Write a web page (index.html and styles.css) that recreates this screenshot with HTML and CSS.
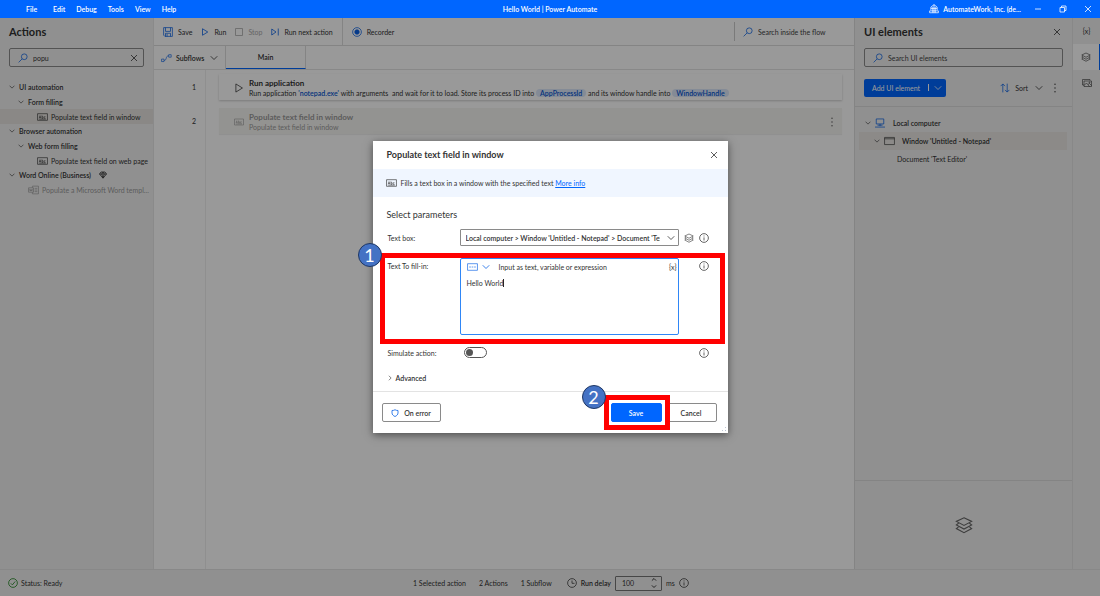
FILE: index.html
```html
<!DOCTYPE html>
<html lang="en">
<head>
    <meta charset="UTF-8">
    <meta name="viewport" content="width=device-width, initial-scale=1.0">
    <title>Hello World | Power Automate</title>
    <link rel="stylesheet" href="styles.css">
</head>
<body>

    <!-- shared icons -->
    <svg class="sprite" aria-hidden="true">
        <symbol id="i-search" viewBox="0 0 16 16"><circle cx="10" cy="6" r="4.6"/><path d="M6.6 9.4 1 15"/></symbol>
        <symbol id="i-close" viewBox="0 0 16 16"><path d="M2 2l12 12M14 2 2 14"/></symbol>
        <symbol id="i-down" viewBox="0 0 16 16"><path d="M1.5 4.5 8 11l6.5-6.5"/></symbol>
        <symbol id="i-right" viewBox="0 0 16 16"><path d="M5 2l6 6-6 6"/></symbol>
        <symbol id="i-play" viewBox="0 0 16 16"><path d="M3 1.5v13L13.5 8z"/></symbol>
        <symbol id="i-next" viewBox="0 0 16 16"><path d="M1.5 2v12L10 8zM14.5 1v14"/></symbol>
        <symbol id="i-save" viewBox="0 0 16 16"><path d="M1 1h14v14H3l-2-2zM4 1v6h8V1M4 15v-5h8v5M6.5 11v4"/></symbol>
        <symbol id="i-stop" viewBox="0 0 16 16"><path d="M1 1h14v14H1z"/></symbol>
        <symbol id="i-record" viewBox="0 0 16 16"><circle cx="8" cy="8" r="7"/><circle cx="8" cy="8" r="3.6" fill="currentColor"/></symbol>
        <symbol id="i-flow" viewBox="0 0 20 16"><path d="M1 10h4.500v4.500H1zM14 2h4.500v4.500H14zM5.500 12.500c6 0 2-8.500 8.500-8.500"/></symbol>
        <symbol id="i-field" viewBox="0 0 20 16"><path d="M1 2h18v12H1z"/><path stroke-width="1" d="M4 10.500l1.500-5 1.500 5M4.500 9h2M9 5v5.500h2V7.500H9M15.500 7.500H13v3h2.500M4 12h12"/></symbol>
        <symbol id="i-word" viewBox="0 0 20 16"><path d="M8 4V1h11v14H8v-3M1 4h9v8H1zM3 6l1 4 1.500-3L7 10l1-4M12 5h5M12 8h5M12 11h5"/></symbol>
        <symbol id="i-gem" viewBox="0 0 16 16"><path d="M4 2h8l3 4-7 8.500L1 6zM1 6h14M5.500 6 8 14l2.500-8L8 2 5.500 6"/></symbol>
        <symbol id="i-layers" viewBox="0 0 20 20"><path d="M10 2l8.500 4L10 10.500 1.500 6zM4 8l-2.500 2L10 14.500l8.500-4.500L16 8M4 12l-2.500 2L10 18.500l8.500-4.500L16 12"/></symbol>
        <symbol id="i-image" viewBox="0 0 20 16"><path d="M4 12H1V1h15v2M4 4h15v11H4zM4 13l5-5 6 7M12 11l3-2 4 4"/><circle cx="15" cy="7" r="1"/></symbol>
        <symbol id="i-info" viewBox="0 0 16 16"><circle cx="8" cy="8" r="7"/><path d="M8 7v5M8 4v1.500"/></symbol>
        <symbol id="i-clock" viewBox="0 0 16 16"><circle cx="8" cy="8" r="7"/><path d="M8 4v4.500h4"/></symbol>
        <symbol id="i-check" viewBox="0 0 16 16"><circle cx="8" cy="8" r="7"/><path d="M4.500 8.500 7 11l4.500-5.500"/></symbol>
        <symbol id="i-sort" viewBox="0 0 16 16"><path d="M4.500 15V1.500M1 5l3.500-3.500L8 5M11.500 1v13.500M8 11l3.500 3.500L15 11"/></symbol>
        <symbol id="i-more" viewBox="0 0 16 16"><g fill="currentColor" stroke="none"><circle cx="8" cy="2" r="1.100"/><circle cx="8" cy="8" r="1.100"/><circle cx="8" cy="14" r="1.100"/></g></symbol>
        <symbol id="i-pc" viewBox="0 0 16 16"><path d="M2 1.500h12v8H2zM8 9.500V13M4 11.500h8M0 14.500h16"/></symbol>
        <symbol id="i-window" viewBox="0 0 20 16"><path d="M1 1.500h18v13H1zM1 4h18"/></symbol>
        <symbol id="i-shield" viewBox="0 0 16 16"><path d="M8 1.500c2 1.300 4 1.500 6 1.500v5c0 3-2.500 5.500-6 7-3.500-1.500-6-4-6-7V3c2 0 4-.2 6-1.500z"/></symbol>
        <symbol id="i-org" viewBox="0 0 16 16"><path d="M3 10V5l5-4 5 4v5M1 14h14v-3H1zM6 14V5M10 14V5M3 7h10M8 1v13"/></symbol>
        <symbol id="i-min" viewBox="0 0 16 16"><path d="M2 8h12"/></symbol>
        <symbol id="i-restore" viewBox="0 0 16 16"><path d="M2 5h9v9H2zM5 5V2h9v9h-3"/></symbol>
        <symbol id="i-text" viewBox="0 0 20 16"><path d="M1 2h18v12H1zM4 8h3M8.500 8h3M13 8h3"/></symbol>
        <symbol id="i-spin" viewBox="0 0 10 20"><path d="M1.500 6 5 2.500 8.500 6M1.500 14 5 17.500 8.500 14"/></symbol>
    </svg>

    <header class="titlebar">
        <nav class="menu">
            <button>File</button>
            <button>Edit</button>
            <button>Debug</button>
            <button>Tools</button>
            <button>View</button>
            <button>Help</button>
        </nav>
        <div class="window-title">Hello World | Power Automate</div>
        <div class="window-controls">
            <button class="account"><svg class="icon"><use href="#i-org"/></svg>AutomateWork, Inc. (de...</button>
            <button class="win-btn" aria-label="Minimize"><svg class="icon small"><use href="#i-min"/></svg></button>
            <button class="win-btn" aria-label="Restore"><svg class="icon small"><use href="#i-restore"/></svg></button>
            <button class="win-btn" aria-label="Close"><svg class="icon small"><use href="#i-close"/></svg></button>
        </div>
    </header>

    <div class="app">
        <div class="workspace">
            <aside class="actions">
                <h2>Actions</h2>
                <div class="search">
                    <svg class="icon blue"><use href="#i-search"/></svg>
                    <input type="text" value="popu" aria-label="Search actions">
                    <button aria-label="Clear"><svg class="icon small"><use href="#i-close"/></svg></button>
                </div>
                <ul class="tree">
                    <li class="group"><svg class="icon tiny"><use href="#i-down"/></svg>UI automation</li>
                    <li class="subgroup"><svg class="icon tiny"><use href="#i-down"/></svg>Form filling</li>
                    <li class="leaf selected"><svg class="icon wide"><use href="#i-field"/></svg>Populate text field in window</li>
                    <li class="group"><svg class="icon tiny"><use href="#i-down"/></svg>Browser automation</li>
                    <li class="subgroup"><svg class="icon tiny"><use href="#i-down"/></svg>Web form filling</li>
                    <li class="leaf"><svg class="icon wide"><use href="#i-field"/></svg>Populate text field on web page</li>
                    <li class="group"><svg class="icon tiny"><use href="#i-down"/></svg>Word Online (Business)<svg class="icon small gem"><use href="#i-gem"/></svg></li>
                    <li class="leaf word"><svg class="icon wide"><use href="#i-word"/></svg>Populate a Microsoft Word templ...</li>
                </ul>
            </aside>

            <main class="designer">
                <div class="toolbar">
                    <button><svg class="icon blue"><use href="#i-save"/></svg>Save</button>
                    <button><svg class="icon small blue"><use href="#i-play"/></svg>Run</button>
                    <button disabled><svg class="icon small"><use href="#i-stop"/></svg>Stop</button>
                    <button><svg class="icon small blue"><use href="#i-next"/></svg>Run next action</button>
                    <button class="recorder"><svg class="icon blue"><use href="#i-record"/></svg>Recorder</button>
                    <div class="flow-search">
                        <svg class="icon blue"><use href="#i-search"/></svg>
                        <input type="text" placeholder="Search inside the flow" aria-label="Search inside the flow">
                    </div>
                </div>
                <div class="tabs">
                    <button class="subflows"><svg class="icon wide blue"><use href="#i-flow"/></svg>Subflows<svg class="icon small"><use href="#i-down"/></svg></button>
                    <button class="tab">Main</button>
                </div>
                <div class="flow">
                    <div class="line-numbers"><span>1</span><span>2</span></div>
                    <div class="steps">
                        <div class="step">
                            <svg class="icon"><use href="#i-play"/></svg>
                            <div>
                                <h3>Run application</h3>
                                <p>Run application <b>'notepad.exe'</b> with arguments &nbsp;and wait for it to load. Store its process ID into <b class="var">AppProcessId</b> and its window handle into <b class="var">WindowHandle</b></p>
                            </div>
                        </div>
                        <div class="step pending">
                            <svg class="icon wide"><use href="#i-field"/></svg>
                            <div>
                                <h3>Populate text field in window</h3>
                                <p>Populate text field in window</p>
                            </div>
                            <button aria-label="More actions"><svg class="icon"><use href="#i-more"/></svg></button>
                        </div>
                    </div>
                </div>
            </main>

            <aside class="elements">
                <div class="panel-head">
                    <h2>UI elements</h2>
                    <button aria-label="Close pane"><svg class="icon small"><use href="#i-close"/></svg></button>
                </div>
                <div class="search">
                    <svg class="icon blue"><use href="#i-search"/></svg>
                    <input type="text" placeholder="Search UI elements" aria-label="Search UI elements">
                </div>
                <div class="element-actions">
                    <button class="add-btn">Add UI element<span></span><svg class="icon small"><use href="#i-down"/></svg></button>
                    <button class="sort-btn"><svg class="icon blue"><use href="#i-sort"/></svg>Sort<svg class="icon small"><use href="#i-down"/></svg></button>
                    <button aria-label="More"><svg class="icon"><use href="#i-more"/></svg></button>
                </div>
                <ul class="element-tree">
                    <li><svg class="icon tiny"><use href="#i-down"/></svg><svg class="icon blue pc"><use href="#i-pc"/></svg>Local computer</li>
                    <li class="selected"><svg class="icon tiny"><use href="#i-down"/></svg><svg class="icon wide"><use href="#i-window"/></svg>Window 'Untitled - Notepad'</li>
                    <li class="document">Document 'Text Editor'</li>
                </ul>
                <div class="preview"><svg class="icon big"><use href="#i-layers"/></svg></div>
            </aside>

            <nav class="rail">
                <button aria-label="Variables">{x}</button>
                <button class="active" aria-label="UI elements"><svg class="icon"><use href="#i-layers"/></svg></button>
                <button aria-label="Images"><svg class="icon"><use href="#i-image"/></svg></button>
            </nav>
        </div>

        <footer class="status">
            <div class="ready"><svg class="icon green"><use href="#i-check"/></svg>Status: Ready</div>
            <div class="counts">
                <span>1 Selected action</span>
                <span>2 Actions</span>
                <span>1 Subflow</span>
            </div>
            <div class="delay">
                <svg class="icon"><use href="#i-clock"/></svg>
                <label for="delay">Run delay</label>
                <div class="number">
                    <input type="text" id="delay" value="100">
                    <svg class="icon spin"><use href="#i-spin"/></svg>
                </div>
                ms
                <svg class="icon"><use href="#i-info"/></svg>
            </div>
        </footer>

        <div class="overlay">
            <div class="dialog" role="dialog" aria-labelledby="dialogTitle">
                <div class="dialog-head">
                    <h1 id="dialogTitle">Populate text field in window</h1>
                    <button aria-label="Close"><svg class="icon small"><use href="#i-close"/></svg></button>
                </div>
                <div class="banner"><svg class="icon wide"><use href="#i-field"/></svg><p>Fills a text box in a window with the specified text <a href="#">More info</a></p></div>

                <div class="params">
                    <h2>Select parameters</h2>
                    <div class="row">
                        <label for="target">Text box:</label>
                        <div class="select">
                            <select id="target">
                                <option>Local computer &gt; Window 'Untitled - Notepad' &gt; Document 'Text Editor'</option>
                            </select>
                            <svg class="icon small"><use href="#i-down"/></svg>
                        </div>
                        <svg class="icon"><use href="#i-layers"/></svg>
                        <svg class="icon info"><use href="#i-info"/></svg>
                    </div>
                    <div class="row fill">
                        <label for="fillText">Text To fill-in:</label>
                        <div class="editor">
                            <div class="editor-bar">
                                <svg class="icon wide blue"><use href="#i-text"/></svg>
                                <svg class="icon small blue"><use href="#i-down"/></svg>
                                <span>Input as text, variable or expression</span>
                                <button aria-label="Insert variable">{x}</button>
                            </div>
                            <textarea id="fillText">Hello World</textarea>
                            <i class="caret"></i>
                        </div>
                        <svg class="icon info"><use href="#i-info"/></svg>
                        <div class="highlight"><span class="badge">1</span></div>
                    </div>
                    <div class="row simulate">
                        <label for="simulate">Simulate action:</label>
                        <input type="checkbox" class="switch" id="simulate">
                        <svg class="icon info"><use href="#i-info"/></svg>
                    </div>
                    <button class="advanced"><svg class="icon tiny"><use href="#i-right"/></svg>Advanced</button>
                </div>

                <div class="dialog-foot">
                    <button class="btn on-error"><svg class="icon small blue"><use href="#i-shield"/></svg>On error</button>
                    <div class="save-wrap">
                        <button class="btn primary">Save</button>
                        <div class="highlight"><span class="badge">2</span></div>
                    </div>
                    <button class="btn">Cancel</button>
                </div>
                <i class="grip"></i>
            </div>
        </div>
    </div>

</body>
</html>
```
FILE: styles.css
```css
* {
    box-sizing: border-box;
}

html, body {
    height: 100%;
    margin: 0;
}

body {
    display: flex;
    flex-direction: column;
    font-family: 'Lato', 'Open Sans', sans-serif;
    font-size: 7px;
    line-height: 10px;
    color: #333;
    background-color: #fff;
    overflow: hidden;
}

h1, h2, h3, p, ul {
    margin: 0;
    padding: 0;
}

ul {
    list-style: none;
}

button, input, select, textarea {
    font: inherit;
    color: inherit;
    background: none;
    border: none;
    padding: 0;
    margin: 0;
    outline: none;
}

button {
    display: flex;
    align-items: center;
    white-space: nowrap;
    cursor: pointer;
}

input {
    min-width: 0;
}

::placeholder {
    color: #444;
    opacity: 1;
}

/* icons */
.sprite {
    position: absolute;
    width: 0;
    height: 0;
}

.icon {
    width: 10px;
    height: 10px;
    flex: none;
    fill: none;
    stroke: currentColor;
    stroke-width: 1.2;
}

.small {
    width: 8px;
    height: 8px;
    stroke-width: 1.6;
}

.tiny {
    width: 6px;
    height: 6px;
    stroke-width: 1.6;
}

.wide {
    width: 11px;
}

.big {
    width: 18px;
    height: 18px;
}

.blue {
    color: #0a62e6;
}

.green {
    color: #107c10;
}

/* title bar */
.titlebar {
    display: grid;
    grid-template-columns: 1fr auto 1fr;
    align-items: center;
    height: 18px;
    flex: none;
    color: #fff;
    background-color: #0066ff;
    font-weight: 600;
}

.menu {
    display: flex;
    gap: 11px;
    padding-left: 26px;
}

.menu button:first-child {
    margin-right: 5px;
}

.window-controls {
    display: flex;
    justify-content: flex-end;
}

.account {
    gap: 4px;
    margin-right: 4px;
}

.win-btn {
    justify-content: center;
    width: 25px;
}

/* main layout */
.app {
    position: relative;
    display: flex;
    flex-direction: column;
    flex: 1;
    min-height: 0;
}

.workspace {
    display: grid;
    grid-template-columns: 154px 1fr 218px 28px;
    flex: 1;
    min-height: 0;
}

.actions, .elements, .rail, .status {
    background-color: #f1f1f1;
}

.actions {
    border-right: 1px solid #e6e6e6;
}

.actions h2, .elements h2 {
    padding-left: 9px;
    font-size: 11px;
    line-height: 16px;
    font-weight: 700;
}

.actions h2 {
    margin-top: 6px;
}

.search {
    display: flex;
    align-items: center;
    gap: 5px;
    height: 19px;
    margin: 8px 9px 0;
    padding: 0 5px 0 8px;
    border: 1px solid #8a8a8a;
    border-radius: 2px;
}

.search input {
    flex: 1;
}

.tree {
    margin-top: 13px;
}

.tree li {
    display: flex;
    align-items: center;
    height: 15px;
    gap: 4px;
    white-space: nowrap;
    font-weight: 600;
}

.tree .group {
    height: 14px;
    padding-left: 9px;
}

.tree .subgroup {
    padding-left: 18px;
}

.tree .leaf {
    gap: 3px;
    padding-left: 37px;
    font-weight: 400;
}

.tree .word {
    padding-left: 28px;
    color: #999;
}

.selected {
    background-color: #e6e3df;
}

.gem {
    margin-left: 4px;
}

/* designer */
.designer {
    display: flex;
    flex-direction: column;
    min-width: 0;
}

.toolbar {
    display: flex;
    align-items: center;
    height: 28px;
    padding-left: 9px;
    gap: 9px;
    border-bottom: 1px solid #dcdcdc;
}

.toolbar button {
    gap: 5px;
}

.toolbar button:disabled {
    color: #aaa;
}

.toolbar .recorder {
    height: 100%;
    padding-left: 9px;
    border-left: 1px solid #dcdcdc;
}

.flow-search {
    display: flex;
    align-items: center;
    gap: 5px;
    width: 120px;
    height: 19px;
    margin-left: auto;
    padding-left: 8px;
    border-left: 1px solid #ccc;
}

.flow-search input {
    flex: 1;
}

.tabs {
    display: flex;
    height: 24px;
    border-bottom: 1px solid #e3e3e3;
    font-weight: 600;
}

.subflows {
    gap: 4px;
    width: 72px;
    padding-left: 7px;
    border-right: 1px solid #dcdcdc;
}

.subflows .small {
    margin-left: 2px;
}

.tab {
    justify-content: center;
    width: 80px;
    border-right: 1px solid #dcdcdc;
    border-bottom: 1px solid #0066ff;
}

.flow {
    display: flex;
    flex: 1;
}

.line-numbers {
    display: flex;
    flex-direction: column;
    gap: 24px;
    width: 52px;
    padding: 12px 9px 0 0;
    text-align: right;
    border-right: 1px solid #eee;
}

.steps {
    display: flex;
    flex-direction: column;
    gap: 8px;
    flex: 1;
    min-width: 0;
    padding: 4px 12px 0 13px;
}

.step {
    display: flex;
    align-items: center;
    gap: 5px;
    height: 26px;
    padding: 1px 5px 0 15px;
    box-shadow: 0 1px 2px rgba(0, 0, 0, 0.2);
}

.step .wide {
    width: 10px;
}

.step h3 {
    font-size: 8px;
    line-height: 10px;
    font-weight: 700;
}

.step p {
    white-space: nowrap;
}

.step b {
    color: #0a57d0;
    font-weight: 600;
}

.step .var {
    padding: 0 4px;
    border-radius: 5px;
    background-color: #dce8fb;
}

.step.pending {
    color: #9a9a9a;
    background-color: #f6f5f2;
    box-shadow: 0 1px 1px rgba(0, 0, 0, 0.06);
}

.step button {
    margin-left: auto;
    color: #555;
}

/* ui elements panel */
.elements {
    display: flex;
    flex-direction: column;
    border-left: 1px solid #dcdcdc;
}

.panel-head {
    display: flex;
    align-items: center;
    justify-content: space-between;
    margin-top: 6px;
    padding-right: 11px;
}

.element-actions {
    display: flex;
    align-items: center;
    gap: 7px;
    height: 40px;
    padding: 2px 12px 0 9px;
    border-bottom: 1px solid #dcdcdc;
}

.add-btn {
    gap: 5px;
    height: 18px;
    padding: 0 4px 0 8px;
    color: #fff;
    background-color: #0066ff;
    border-radius: 2px;
}

.add-btn span {
    width: 1px;
    height: 7px;
    margin-left: 3px;
    background-color: #fff;
}

.sort-btn {
    gap: 5px;
    margin-left: auto;
}

.sort-btn .small {
    margin-left: 2px;
}

.element-tree {
    flex: 1;
    padding: 7px 5px 0 4px;
}

.element-tree li {
    display: flex;
    align-items: center;
    gap: 4px;
    height: 18px;
    padding-left: 6px;
    font-weight: 600;
}

.element-tree .pc {
    margin-right: 4px;
}

.element-tree .selected {
    padding-left: 15px;
    background-color: #e9e7e3;
}

.element-tree .selected .wide {
    margin-right: 3px;
}

.element-tree .document {
    padding-left: 38px;
    font-weight: 400;
}

.preview {
    display: flex;
    align-items: center;
    justify-content: center;
    height: 89px;
    border-top: 1px solid #dcdcdc;
    color: #666;
}

.rail {
    display: flex;
    flex-direction: column;
    border-left: 1px solid #e3e3e3;
}

.rail button {
    justify-content: center;
    height: 26px;
}

.rail .active {
    background-color: #fff;
    border-right: 1px solid #0066ff;
}

/* status bar */
.status {
    display: grid;
    grid-template-columns: 413px auto 1fr;
    align-items: center;
    height: 27px;
    flex: none;
    border-top: 1px solid #e3e3e3;
}

.ready, .counts, .delay {
    display: flex;
    align-items: center;
    gap: 4px;
}

.ready {
    gap: 3px;
    padding-left: 8px;
}

.counts {
    gap: 13px;
}

.delay {
    padding-left: 15px;
}

.delay label {
    font-weight: 600;
}

.number {
    display: flex;
    align-items: center;
    width: 47px;
    height: 15px;
    padding: 0 4px 0 6px;
    border: 1px solid #777;
    border-radius: 1px;
}

.number input {
    flex: 1;
}

.number .spin {
    width: 6px;
    height: 12px;
    stroke-width: 1.6;
}

/* dialog */
.overlay {
    position: absolute;
    inset: 0;
    display: flex;
    justify-content: center;
    align-items: flex-start;
    padding-top: 123px;
    background-color: rgba(0, 0, 0, 0.4);
}

.dialog {
    position: relative;
    width: 355px;
    background-color: #fff;
    box-shadow: 0 2px 8px rgba(0, 0, 0, 0.5);
}

.dialog-head {
    display: flex;
    align-items: center;
    justify-content: space-between;
    height: 28px;
    padding: 0 10px 0 14px;
}

.dialog h1 {
    font-size: 9px;
    font-weight: 700;
}

.banner {
    display: flex;
    align-items: center;
    gap: 4px;
    height: 28px;
    padding-left: 13px;
    background-color: #f0f6ff;
}

.banner a {
    color: #0066ff;
}

.params {
    padding: 12px 19px 8px 14px;
}

.params h2 {
    font-size: 9px;
    line-height: 12px;
    font-weight: 400;
}

.row {
    display: flex;
    align-items: center;
    gap: 5px;
    margin-top: 8px;
}

.row label {
    width: 68px;
    padding-left: 1px;
}

.row .info {
    margin-left: auto;
}

.select {
    display: flex;
    align-items: center;
    width: 219px;
    height: 17px;
    padding: 0 3px 0 5px;
    border: 1px solid #8a8a8a;
    border-radius: 1px;
}

.select select {
    flex: 1;
    min-width: 0;
    margin-right: 7px;
    appearance: none;
    font-weight: 600;
    text-overflow: clip;
}

.fill {
    position: relative;
    align-items: flex-start;
    margin-top: 12px;
}

.fill label, .fill .info {
    margin-top: 3px;
}

.editor {
    position: relative;
    width: 219px;
    height: 77px;
    border: 1px solid #2f86f6;
    border-radius: 2px;
}

.editor-bar {
    display: flex;
    align-items: center;
    gap: 4px;
    height: 16px;
    padding: 0 1px 0 6px;
}

.editor-bar span {
    margin-left: 5px;
}

.editor-bar button {
    margin-left: auto;
}

.editor textarea {
    display: block;
    width: 100%;
    height: 54px;
    padding: 3px 6px;
    resize: none;
}

.caret {
    position: absolute;
    left: 42px;
    top: 20px;
    width: 1px;
    height: 8px;
    background-color: #242424;
}

.highlight {
    position: absolute;
    inset: -5px -16px -9px -7px;
    border: 5px solid #ff0000;
    pointer-events: none;
}

.badge {
    position: absolute;
    left: -27px;
    top: -15px;
    width: 24px;
    height: 24px;
    border: 1px solid #1f3763;
    border-radius: 50%;
    background-color: #4472c4;
    color: #fff;
    font-size: 18px;
    line-height: 22px;
    text-align: center;
}

.simulate {
    margin-top: 12px;
}

.switch {
    display: flex;
    align-items: center;
    width: 23px;
    height: 11px;
    margin-left: 4px;
    padding-left: 1px;
    appearance: none;
    border: 1px solid #555;
    border-radius: 6px;
}

.switch::before {
    content: "";
    width: 7px;
    height: 7px;
    border-radius: 50%;
    background-color: #555;
}

.switch:checked {
    justify-content: flex-end;
    background-color: #cce0ff;
}

.advanced {
    gap: 3px;
    margin-top: 15px;
    font-weight: 600;
}

.dialog-foot {
    display: flex;
    align-items: center;
    height: 42px;
    padding: 0 11px 0 9px;
    border-top: 1px solid #e3e3e3;
}

.btn {
    justify-content: center;
    width: 51px;
    height: 19px;
    border: 1px solid #8a8a8a;
    border-radius: 2px;
    font-weight: 600;
}

.btn.on-error {
    gap: 5px;
    width: 59px;
}

.btn.primary {
    color: #fff;
    background-color: #0066ff;
    border-color: #0066ff;
}

.save-wrap {
    position: relative;
    margin: 0 4px 0 auto;
}

.save-wrap .highlight {
    inset: -8px -8px -8px -7px;
}

/* resize corner */
.grip {
    position: absolute;
    right: 1px;
    bottom: 1px;
    width: 6px;
    height: 6px;
    background: radial-gradient(circle, #b5bfd0 0 1px, transparent 1px) 0 0 / 3px 3px;
    clip-path: polygon(100% 0, 100% 100%, 0 100%);
}
```
